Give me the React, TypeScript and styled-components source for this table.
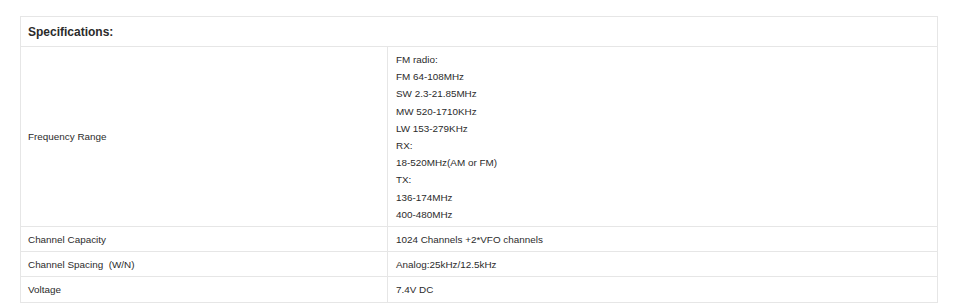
import styled, { createGlobalStyle } from 'styled-components';

const GlobalStyle = createGlobalStyle`
  body {
    margin: 0;
    background: #ffffff;
    font-family: "Liberation Sans", Arial, sans-serif;
  }
`;

const specs: { label: string; lines: string[] }[] = [
  {
    label: 'Frequency Range',
    lines: [
      'FM radio:',
      'FM 64-108MHz',
      'SW 2.3-21.85MHz',
      'MW 520-1710KHz',
      'LW 153-279KHz',
      'RX:',
      '18-520MHz(AM or FM)',
      'TX:',
      '136-174MHz',
      '400-480MHz',
    ],
  },
  { label: 'Channel Capacity', lines: ['1024 Channels +2*VFO channels'] },
  { label: 'Channel Spacing\u00a0\u00a0(W/N)', lines: ['Analog:25kHz/12.5kHz'] },
  { label: 'Voltage', lines: ['7.4V DC'] },
];

export default function App() {
  return (
    <Page>
      <GlobalStyle />
      <Table>
        <colgroup>
          <col style={{ width: 367 }} />
          <col />
        </colgroup>
        <tbody>
          <tr>
            <Heading colSpan={2}>Specifications:</Heading>
          </tr>
          {specs.map((s) => (
            <tr key={s.label}>
              <Label>{s.label}</Label>
              <Value>
                {s.lines.map((l) => (
                  <Line key={l}>{l}</Line>
                ))}
              </Value>
            </tr>
          ))}
        </tbody>
      </Table>
    </Page>
  );
}

const Page = styled.div`
  padding: 16px 22px 0 20px;
  height: 305px;
  box-sizing: border-box;
  overflow: hidden;
`;

const Table = styled.table`
  width: 100%;
  table-layout: fixed;
  border-collapse: collapse;
  border: 1px solid #e6e6e6;
  color: #2b2b2b;
  font-size: 9.9px;
`;

const Heading = styled.th`
  text-align: left;
  font-size: 12px;
  font-weight: bold;
  color: #2b2b2b;
  height: 29px;
  padding: 0 7px;
  border: 1px solid #e6e6e6;
`;

const Label = styled.td`
  padding: 4px 7px 3px;
  line-height: 17.2px;
  vertical-align: middle;
  border: 1px solid #e6e6e6;
  white-space: pre;
`;

const Value = styled.td`
  padding: 4px 8px 3px;
  line-height: 17.2px;
  border: 1px solid #e6e6e6;
`;

const Line = styled.div``;
